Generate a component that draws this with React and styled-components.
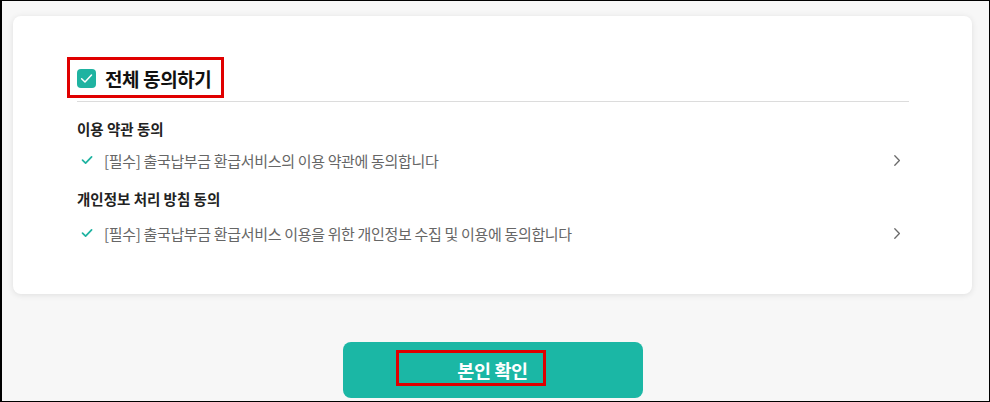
import React from 'react'
import styled, { createGlobalStyle } from 'styled-components'

const GlobalStyle = createGlobalStyle`
  html, body {
    margin: 0;
    padding: 0;
  }
  body {
    font-family: 'Noto Sans CJK KR', 'Noto Sans', sans-serif;
    background: #f7f7f7;
  }
  * {
    box-sizing: border-box;
  }
`

const Page = styled.div`
  width: 990px;
  height: 402px;
  border: 1px solid #000;
  border-left-width: 2px;
  background: #f7f7f7;
  padding: 15px 17px 0 11px;
  display: flex;
  flex-direction: column;
  align-items: center;
`

const Card = styled.section`
  width: 100%;
  height: 278px;
  background: #fff;
  border-radius: 8px;
  box-shadow: 0 1px 6px rgba(0, 0, 0, 0.1);
  padding: 41px 63px 0 64px;
`

const Header = styled.div`
  display: inline-flex;
  align-items: center;
  gap: 9px;
  margin-left: -10px;
  padding: 5px 10px 4px 7px;
  border: 3px solid #e00000;
  height: 41px;
`

const CheckBox = styled.span`
  width: 19px;
  height: 19px;
  border-radius: 4px;
  background: #1fb3a1;
  display: flex;
  align-items: center;
  justify-content: center;
`

const Title = styled.strong`
  font-size: 19px;
  font-weight: 700;
  color: #111;
  letter-spacing: -0.4px;
  line-height: 1;
`

const Divider = styled.hr`
  margin: 3px 0 0;
  border: 0;
  border-top: 1px solid #dcdcdc;
`

const Group = styled.div`
  display: flex;
  flex-direction: column;
`

const Label = styled.h3`
  margin: 0;
  font-size: 14.5px;
  font-weight: 700;
  color: #222;
  line-height: 20px;
  margin-top: ${(props) => props.$top}px;
`

const Row = styled.div`
  display: flex;
  align-items: center;
  height: 20px;
  margin-top: ${(props) => props.$top}px;
  padding-left: 4px;
  padding-right: 8px;
`

const RowText = styled.span`
  flex: 1;
  margin-left: 11px;
  font-size: 15px;
  color: #666;
  letter-spacing: -0.33px;
`

const Button = styled.button`
  position: relative;
  margin-top: 48px;
  width: 300px;
  height: 56px;
  border: 0;
  border-radius: 8px;
  background: #1bb7a5;
  color: #fff;
  font-family: inherit;
  font-size: 18.5px;
  font-weight: 700;
  letter-spacing: -0.4px;
  cursor: pointer;
`

// red annotation box laid over the button
const Mark = styled.span`
  position: absolute;
  left: 53px;
  top: 8px;
  width: 150px;
  height: 36px;
  border: 3px solid #e00000;
`

const Check = ({ color = '#1fb3a1', size = 12, weight = 1.7 }) => (
  <svg width={size} height={size} viewBox="0 0 12 12" fill="none">
    <path d="M1.5 6.2 L4.6 9.2 L10.6 2.8" stroke={color} strokeWidth={weight} strokeLinecap="round" strokeLinejoin="round" />
  </svg>
)

const Chevron = () => (
  <svg width="8" height="13" viewBox="0 0 8 13" fill="none">
    <path d="M1.8 1.8 L6.4 6.5 L1.8 11.2" stroke="#6a6a6a" strokeWidth="1.3" strokeLinecap="round" strokeLinejoin="round" />
  </svg>
)

const terms = [
  { label: '이용 약관 동의', text: '[필수] 출국납부금 환급서비스의 이용 약관에 동의합니다' },
  { label: '개인정보 처리 방침 동의', text: '[필수] 출국납부금 환급서비스 이용을 위한 개인정보 수집 및 이용에 동의합니다' }
]

const App = () => {
  return (
    <>
      <GlobalStyle />
      <Page>
        <Card>
          <Header>
            <CheckBox>
              <Check color="#fff" size={13} weight={1.4} />
            </CheckBox>
            <Title>전체 동의하기</Title>
          </Header>
          <Divider />
          {terms.map((term, index) => (
            <Group key={term.label}>
              <Label $top={index === 0 ? 17 : 19}>{term.label}</Label>
              <Row $top={index === 0 ? 11 : 14}>
                <Check />
                <RowText>{term.text}</RowText>
                <Chevron />
              </Row>
            </Group>
          ))}
        </Card>
        <Button type="button">
          <Mark />
          본인 확인
        </Button>
      </Page>
    </>
  )
}

export default App
